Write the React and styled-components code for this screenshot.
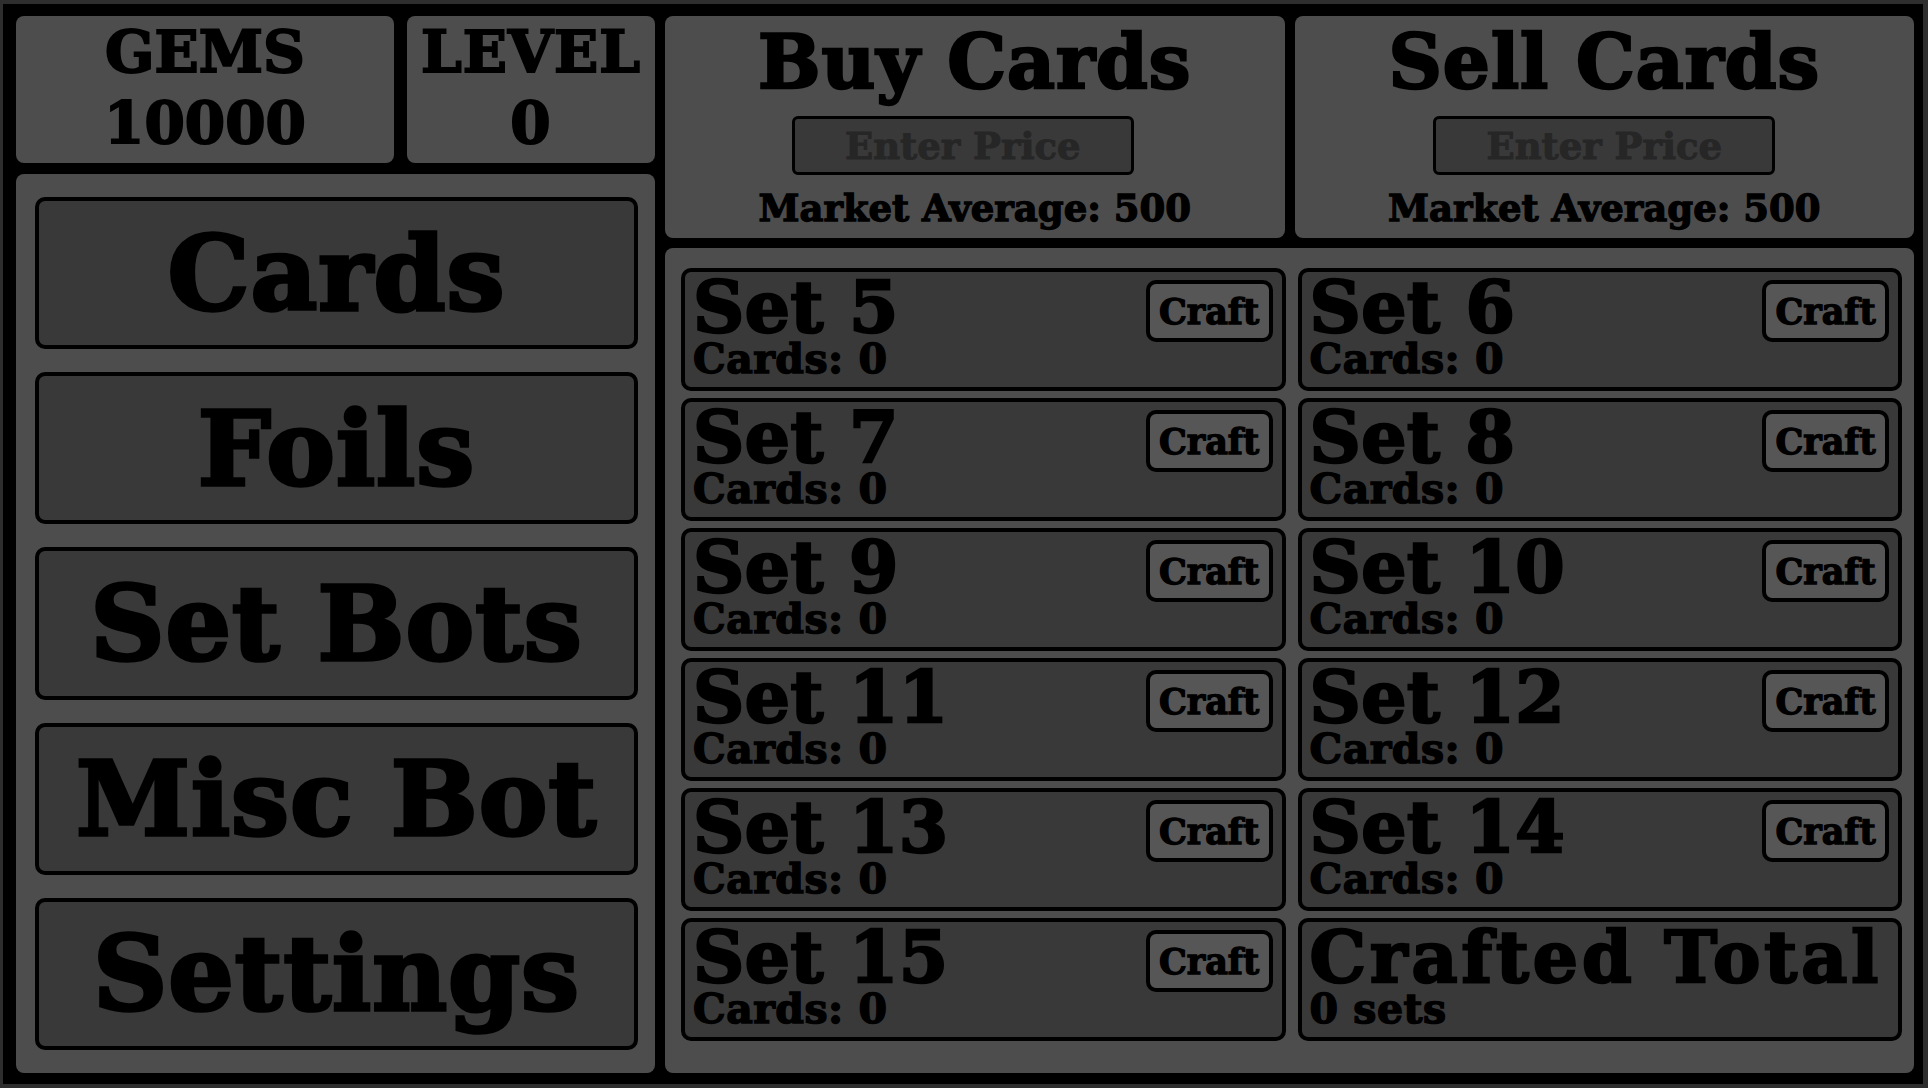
import React from "react";
import styled, { createGlobalStyle } from "styled-components";

const GlobalStyle = createGlobalStyle`
  html, body {
    margin: 0;
    padding: 0;
    background: #2e2e2e;
  }
  body {
    font-family: "DejaVu Serif", "Liberation Serif", serif;
    font-weight: bold;
    color: #000;
  }
  * { box-sizing: border-box; }
`;

const Frame = styled.div`
  width: 1920px;
  height: 1080px;
  margin: 4px 0 0 3px;
  background: #000;
  padding: 12px 9px 11px 13px;
  display: flex;
  gap: 10px;
`;

const LeftColumn = styled.div`
  width: 639px;
  display: flex;
  flex-direction: column;
  gap: 11px;
`;

const RightColumn = styled.div`
  flex: 1;
  display: flex;
  flex-direction: column;
  gap: 10px;
`;

const Panel = styled.div`
  background: #4d4d4d;
  border-radius: 8px;
`;

const StatRow = styled.div`
  height: 147px;
  display: flex;
  gap: 13px;
`;

const StatBox = styled(Panel)`
  width: ${(p) => p.$w}px;
  display: flex;
  flex-direction: column;
  align-items: center;
  padding-top: 1px;
  font-size: 58px;
  line-height: 71px;
  letter-spacing: ${(p) => p.$ls || 0}px;
  -webkit-text-stroke: 2px #000;
`;

const NavPanel = styled(Panel)`
  flex: 1;
  padding: 23px 17px 23px 19px;
  display: flex;
  flex-direction: column;
  gap: 23px;
`;

const NavButton = styled.div`
  flex: 1;
  border: 4px solid #000;
  border-radius: 10px;
  background: #393939;
  display: flex;
  align-items: center;
  justify-content: center;
  font-size: 103px;
  line-height: 1;
  letter-spacing: 1px;
  -webkit-text-stroke: 3.5px #000;
`;

const TradeRow = styled.div`
  height: 222px;
  display: flex;
  gap: 10px;
`;

const TradeBox = styled(Panel)`
  flex: 1;
  display: flex;
  flex-direction: column;
  align-items: center;
  padding-top: 9px;
`;

const TradeTitle = styled.div`
  font-size: 74px;
  line-height: 1;
  letter-spacing: 1px;
  -webkit-text-stroke: 2.5px #000;
`;

const PriceInput = styled.input`
  margin-top: 17px;
  margin-right: ${(p) => (p.$shift ? 24 : 0)}px;
  width: 342px;
  height: 59px;
  background: #393939;
  border: 3px solid #000;
  border-radius: 6px;
  font-family: "DejaVu Serif", "Liberation Serif", serif;
  font-weight: bold;
  font-size: 37px;
  text-align: center;
  color: #000;
  outline: none;
  padding: 0;
  -webkit-text-stroke: 1px #262626;
  &::placeholder {
    color: #262626;
  }
`;

const MarketText = styled.div`
  margin-top: 15px;
  font-size: 37px;
  line-height: 1;
  -webkit-text-stroke: 1.3px #000;
`;

const SetsPanel = styled(Panel)`
  flex: 1;
  padding: 20px 12px 0 16px;
  display: grid;
  grid-template-columns: 1fr 1fr;
  grid-auto-rows: 123px;
  column-gap: 12px;
  row-gap: 7px;
  align-content: start;
`;

const SetCard = styled.div`
  border: 4px solid #000;
  border-radius: 10px;
  background: #393939;
  display: flex;
  justify-content: space-between;
  align-items: flex-start;
  padding: 0 9px 0 8px;
`;

const SetInfo = styled.div`
  display: flex;
  flex-direction: column;
  white-space: nowrap;
  padding-top: 3px;
`;

const SetTitle = styled.div`
  font-size: 71px;
  line-height: 64px;
  letter-spacing: ${(p) => (p.$wide ? 4 : 0.5)}px;
  -webkit-text-stroke: 2.5px #000;
`;

const SetSub = styled.div`
  font-size: 41px;
  line-height: 1;
  letter-spacing: 0.5px;
  -webkit-text-stroke: 1.5px #000;
`;

const CraftButton = styled.div`
  margin-top: 8px;
  width: 127px;
  height: 62px;
  border: 4px solid #000;
  border-radius: 10px;
  background: #565656;
  display: flex;
  align-items: center;
  justify-content: center;
  font-size: 35px;
  line-height: 1;
  -webkit-text-stroke: 1.3px #000;
`;

const navItems = ["Cards", "Foils", "Set Bots", "Misc Bot", "Settings"];
const sets = [5, 6, 7, 8, 9, 10, 11, 12, 13, 14, 15];

export default function App() {
  return (
    <>
      <GlobalStyle />
      <Frame>
        <LeftColumn>
          <StatRow>
            <StatBox $w={378}>
              <div>GEMS</div>
              <div>10000</div>
            </StatBox>
            <StatBox $w={248} $ls={1}>
              <div>LEVEL</div>
              <div>0</div>
            </StatBox>
          </StatRow>
          <NavPanel>
            {navItems.map((n) => (
              <NavButton key={n}>{n}</NavButton>
            ))}
          </NavPanel>
        </LeftColumn>
        <RightColumn>
          <TradeRow>
            <TradeBox>
              <TradeTitle>Buy Cards</TradeTitle>
              <PriceInput $shift placeholder="Enter Price" />
              <MarketText>Market Average: 500</MarketText>
            </TradeBox>
            <TradeBox>
              <TradeTitle>Sell Cards</TradeTitle>
              <PriceInput placeholder="Enter Price" />
              <MarketText>Market Average: 500</MarketText>
            </TradeBox>
          </TradeRow>
          <SetsPanel>
            {sets.map((s) => (
              <SetCard key={s}>
                <SetInfo>
                  <SetTitle>Set {s}</SetTitle>
                  <SetSub>Cards: 0</SetSub>
                </SetInfo>
                <CraftButton>Craft</CraftButton>
              </SetCard>
            ))}
            <SetCard>
              <SetInfo>
                <SetTitle $wide>Crafted Total</SetTitle>
                <SetSub>0 sets</SetSub>
              </SetInfo>
            </SetCard>
          </SetsPanel>
        </RightColumn>
      </Frame>
    </>
  );
}
